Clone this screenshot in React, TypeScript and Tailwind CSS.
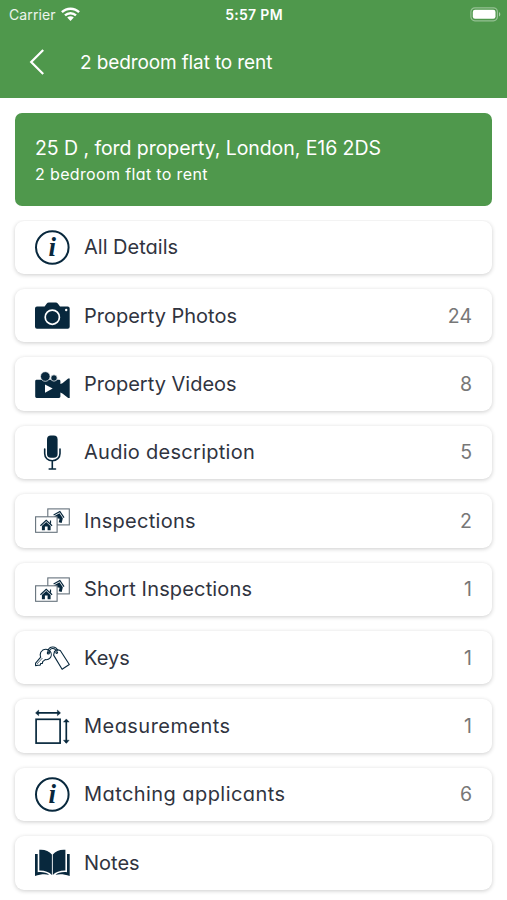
import type { ReactNode } from "react";
import clsx from "clsx";

interface IMenuItem {
  label: string;
  icon: ReactNode;
  count?: number;
  tracking?: string;
}

const InfoIcon = () => (
  <svg viewBox="0 0 35 35" className="size-[35px]" fill="none">
    <circle cx="17.3" cy="17.5" r="16.3" stroke="currentColor" strokeWidth="2" />
    <text
      x="17.2"
      y="26.4"
      textAnchor="middle"
      fill="currentColor"
      className="font-['Liberation_Serif',serif] text-[27px] font-bold italic"
    >
      i
    </text>
  </svg>
);

const CameraIcon = () => (
  <svg viewBox="0 0 35 35" className="size-[35px]" fill="currentColor">
    <path d="M2 8.5h7.6l2-2.7a2.8 2.8 0 0 1 2.3-1.2h6.8a2.8 2.8 0 0 1 2.3 1.2l2 2.7h7.7a2 2 0 0 1 2 2v18.3a2 2 0 0 1-2 2H2a2 2 0 0 1-2-2V10.5a2 2 0 0 1 2-2Z" />
    <circle cx="17.3" cy="19.2" r="7.1" fill="none" stroke="white" strokeWidth="1.7" />
    <circle cx="31.2" cy="12" r="1.2" fill="white" />
  </svg>
);

const VideoIcon = () => (
  <svg viewBox="0 0 35 35" className="size-[35px]" fill="currentColor">
    <path d="M1.6 12.8h22.4a1.4 1.4 0 0 1 1.4 1.4v2.8l2-.8 5.8-4.7h1.5v19.5h-1.5l-5.8-4.6-2-.9v4a1.4 1.4 0 0 1-1.4 1.4H1.6a1.4 1.4 0 0 1-1.4-1.4V14.2a1.4 1.4 0 0 1 1.4-1.4Z" />
    <circle cx="10.3" cy="9.5" r="4.8" stroke="white" strokeWidth="0.7" />
    <circle cx="19" cy="11" r="3.2" stroke="white" strokeWidth="0.7" />
    <path d="M10 17.5l7.7 4.1-7.7 4.1Z" fill="white" />
  </svg>
);

const MicIcon = () => (
  <svg viewBox="0 0 35 35" className="size-[35px]" fill="none" stroke="currentColor" strokeWidth="1.6" strokeLinecap="round">
    <rect x="12" y="0.6" width="10.6" height="22.2" rx="3.8" fill="currentColor" stroke="none" />
    <path d="M9.7 14v4.5c0 4.3 3.2 7.2 7.6 7.2s7.7-2.9 7.7-7.2V14M17.3 26v7.8M14.2 34h6.3" />
  </svg>
);

const HousePhotosIcon = () => (
  <svg viewBox="0 0 35 35" className="size-[35px]" fill="none">
    <rect x="12.8" y="5.9" width="21.5" height="16" fill="white" stroke="#66727c" strokeWidth="1.1" />
    <g transform="rotate(14 24 12)">
      <path d="M18.8 13.4l5.2-5 5.5 5" stroke="currentColor" strokeWidth="1.2" />
      <path d="M20 14l4-3.9 4.5 4.1v4.9h-3v-3.5h-2.5v3.5h-3Z" fill="currentColor" />
    </g>
    <rect x="0.6" y="13.8" width="21.5" height="15.5" fill="white" stroke="#66727c" strokeWidth="1.1" />
    <path d="M5.4 22.7l5.8-5.3 5.9 5.3M15.5 17.5v3" stroke="currentColor" strokeWidth="1.2" />
    <path d="M6.9 22.9l4.3-3.9 4.4 3.9v4.3h-3v-3.8H9.9v3.8h-3Z" fill="currentColor" />
  </svg>
);

const KeysIcon = () => (
  <svg viewBox="0 0 35 35" className="size-[35px]" fill="none" stroke="currentColor" strokeWidth="1.1" strokeLinejoin="round" strokeLinecap="round">
    <path d="M5.7 17.2c-1-2.8-.1-5.6 2.1-7.1 2.2-1.2 5.4-.8 7.2 1.1 1.7 2 1.7 5-.1 6.9-1.2 1.3-3.1 1.8-4.7 1.5l-2.5 2.1-.3 1.7-1.7.1-.5 1.7-2.1.1L.6 25.6l-.2-2.2 5.3-6.2Z" />
    <path d="M2.1 23.8l5.1-5.5" strokeWidth="0.7" />
    <path d="M12.6 13.2c.1-3.3 1.7-5.9 4.6-6.2 2.7-.3 4.6 1.2 5.3 3.2M14.1 13c.1-2.4 1.3-4.3 3.3-4.5 1.8-.2 3 .7 3.6 2" />
    <circle cx="13.3" cy="13" r="1" />
    <path d="M19.5 11.5l2.5-1.9 3.3.9 9 14-7.2 4.8-8.5-14.2Z" />
    <circle cx="21.7" cy="12.6" r="0.9" />
  </svg>
);

const MeasureIcon = () => (
  <svg viewBox="0 0 35 35" className="size-[35px]" fill="none" stroke="currentColor" strokeWidth="1.7">
    <rect x="1.1" y="10.3" width="24" height="23.8" />
    <path d="M2 3.9h22.5M31.3 11v22.5" />
    <path
      d="M.5 3.9l3.2-2.9v5.8ZM25.6 3.9l-3.2-2.9v5.8ZM31.3 9.9l-2.9 3.2h5.8ZM31.3 34.4l-2.9-3.2h5.8Z"
      fill="currentColor"
      strokeWidth="0.4"
    />
  </svg>
);

const BookIcon = () => (
  <svg viewBox="0 0 35 35" className="size-[35px]" fill="currentColor">
    <path d="M4.3 4.7c5.4-.4 9.7 1 12.6 4.7v20.6c-2.7-3-7-4.6-12.6-4.5Z" />
    <path d="M30.4 4.7c-5.4-.4-9.7 1-12.6 4.7v20.6c2.7-3 7-4.6 12.6-4.5Z" />
    <path d="M0 9h2.7v18.2c5-.5 9 .5 11.5 2.7-3.8-1-8.8-.7-14.2 1Z" />
    <path d="M34.7 9h-2.7v18.2c-5-.5-9 .5-11.5 2.7 3.8-1 8.8-.7 14.2 1Z" />
  </svg>
);

const items: IMenuItem[] = [
  { label: "All Details", icon: <InfoIcon /> },
  { label: "Property Photos", icon: <CameraIcon />, count: 24 },
  { label: "Property Videos", icon: <VideoIcon />, count: 8 },
  { label: "Audio description", icon: <MicIcon />, count: 5, tracking: "tracking-[0.28px]" },
  { label: "Inspections", icon: <HousePhotosIcon />, count: 2, tracking: "tracking-[0.28px]" },
  { label: "Short Inspections", icon: <HousePhotosIcon />, count: 1, tracking: "tracking-[0.16px]" },
  { label: "Keys", icon: <KeysIcon />, count: 1 },
  { label: "Measurements", icon: <MeasureIcon />, count: 1, tracking: "tracking-[0.46px]" },
  { label: "Matching applicants", icon: <InfoIcon />, count: 6, tracking: "tracking-[0.43px]" },
  { label: "Notes", icon: <BookIcon /> },
];

const StatusBar = () => (
  <div className="grid h-7 grid-cols-[1fr_auto_1fr] items-center pr-[6px] pl-[7px] text-[14px]">
    <div className="flex items-center gap-[5px] pl-[2px] text-white/90">
      <span className="tracking-[0.1px]">Carrier</span>
      <svg viewBox="0 0 19 14" className="h-[14px] w-[19px]" fill="none" stroke="white" strokeWidth="2.4">
        <path d="M.9 5.2c4.8-4.6 12.4-4.6 17.2 0M4 8.4c3.1-2.9 7.9-2.9 11 0" />
        <path d="M6.2 10.6c1.9-1.7 4.7-1.7 6.6 0L9.5 14Z" fill="white" stroke="none" />
      </svg>
    </div>
    <span className="text-center font-semibold tracking-[0.3px]">5:57 PM</span>
    <svg viewBox="0 0 31 15" className="h-[15px] w-[31px] justify-self-end" fill="none">
      <rect x="0.9" y="0.8" width="26.5" height="13" rx="4" stroke="white" strokeOpacity="0.4" strokeWidth="1.2" />
      <rect x="2.8" y="2.8" width="22.7" height="9" rx="2.2" fill="white" />
      <path d="M29 5v4.6c1.8-.8 1.8-3.8 0-4.6Z" fill="white" fillOpacity="0.5" />
    </svg>
  </div>
);

const MenuRow = ({ label, icon, count, tracking }: IMenuItem) => (
  <button
    type="button"
    className="flex h-[53.4px] w-full shrink-0 items-center rounded-[9px] bg-white px-5 text-left shadow-[0_1px_4px_rgba(0,0,0,0.2)]"
  >
    <span className="text-[#08283d]">{icon}</span>
    <span className={clsx("ml-[14px] flex-1 text-[20px] text-[#30343f]", tracking)}>
      {label}
    </span>
    {count !== undefined && (
      <span className="pt-px text-[19.5px] text-[#777777]">{count}</span>
    )}
  </button>
);

export default function App() {
  return (
    <div className="flex h-[900px] w-[507px] flex-col overflow-hidden bg-white font-['Inter',sans-serif]">
      <header className="h-[98px] shrink-0 bg-[#4f984c] text-white">
        <StatusBar />
        <div className="flex h-[68px] items-center pl-[29px]">
          <svg viewBox="0 0 16 28" className="h-7 w-4" fill="none" stroke="white" strokeWidth="2.2">
            <path d="M14.2 2L2.2 14l12 12" />
          </svg>
          <h1 className="ml-[35px] pt-[2px] text-[19px] tracking-[-0.12px]">2 bedroom flat to rent</h1>
        </div>
      </header>
      <main className="flex flex-1 flex-col [font-feature-settings:'cv11']">
        <section className="mx-[15px] mt-[15px] flex h-[93px] shrink-0 flex-col justify-center rounded-[7px] bg-[#4f984c] px-5 pt-px text-white">
          <h2 className="text-[19.5px] leading-7 tracking-[-0.07px]">25 D , ford property, London, E16 2DS</h2>
          <p className="text-[16px] leading-[25px] tracking-[0.36px]">2 bedroom flat to rent</p>
        </section>
        <div className="mt-[14px] flex flex-1 flex-col gap-[15px] overflow-hidden px-[15px] pt-[0.6px]">
          {items.map((item) => (
            <MenuRow key={item.label} {...item} />
          ))}
        </div>
      </main>
    </div>
  );
}
